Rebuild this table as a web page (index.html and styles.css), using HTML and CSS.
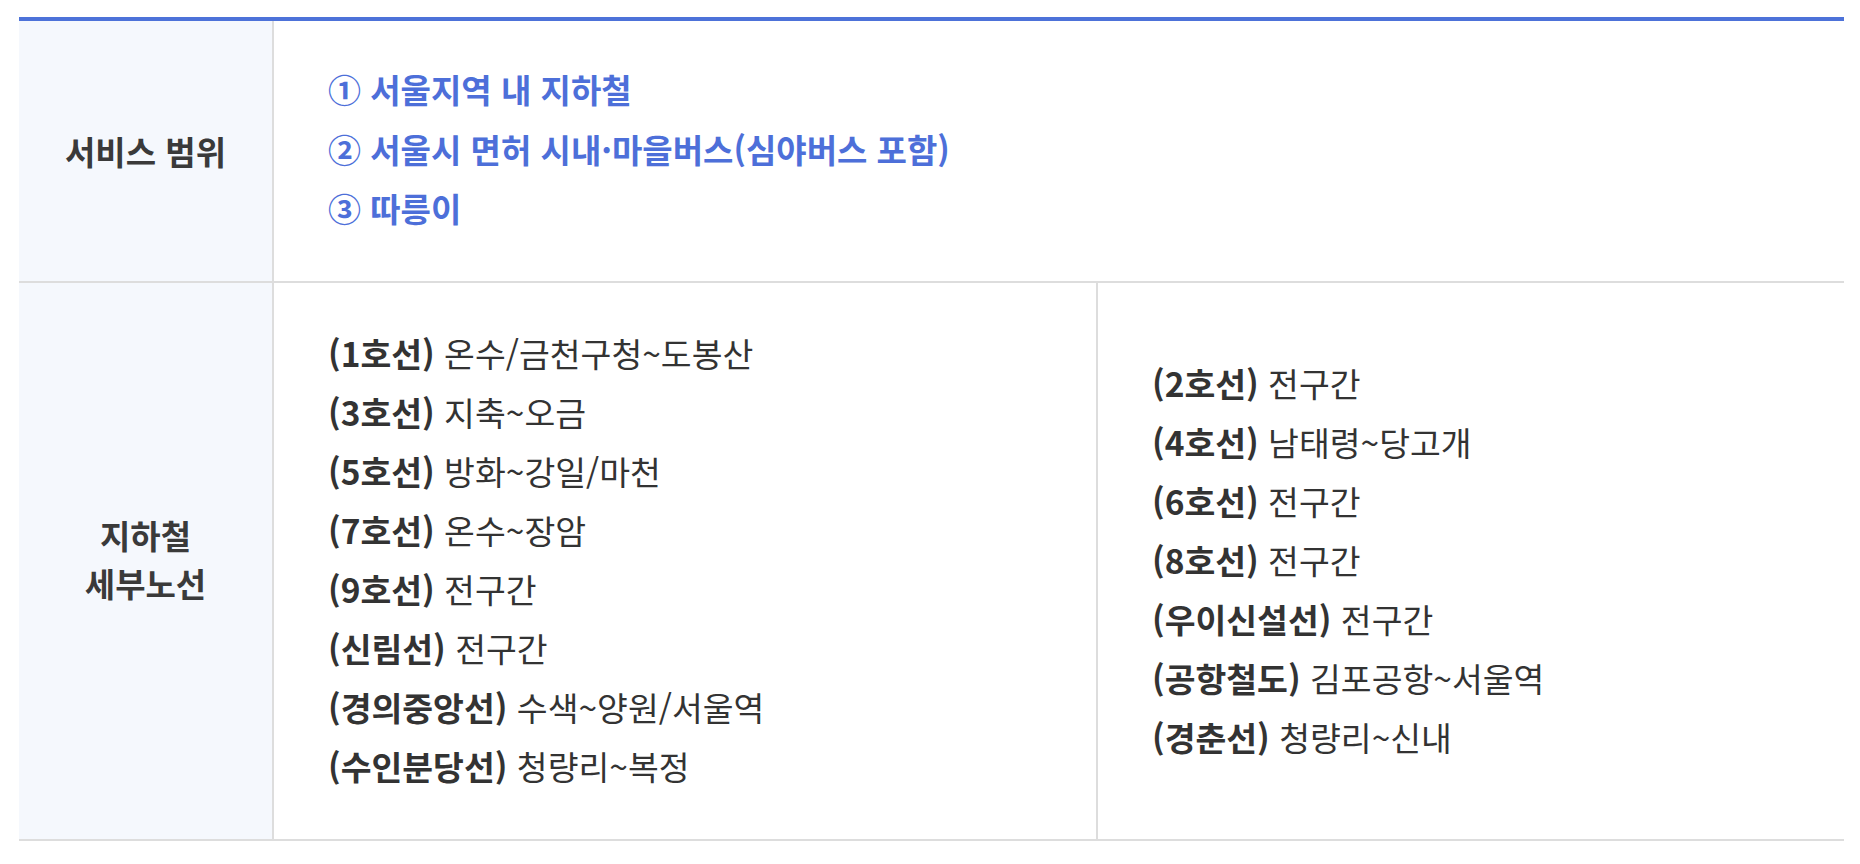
FILE: index.html
```html
<!DOCTYPE html>
<html lang="ko">
<head>
<meta charset="utf-8">
<title>서비스 범위</title>
<link rel="stylesheet" href="styles.css">
</head>
<body>
<div class="wrap">
<table class="info">
  <colgroup>
    <col class="c-head">
    <col class="c-a">
    <col class="c-b">
  </colgroup>
  <tbody>
    <tr>
      <th>서비스 범위</th>
      <td colspan="2" class="scope">
        <p>① 서울지역 내 지하철</p>
        <p>② 서울시 면허 시내·마을버스(심야버스 포함)</p>
        <p>③ 따릉이</p>
      </td>
    </tr>
    <tr>
      <th class="th-lines">지하철<br>세부노선</th>
      <td class="lines">
        <p><b>(1호선)</b> 온수/금천구청~도봉산</p>
        <p><b>(3호선)</b> 지축~오금</p>
        <p><b>(5호선)</b> 방화~강일/마천</p>
        <p><b>(7호선)</b> 온수~장암</p>
        <p><b>(9호선)</b> 전구간</p>
        <p><b>(신림선)</b> 전구간</p>
        <p><b>(경의중앙선)</b> 수색~양원/서울역</p>
        <p><b>(수인분당선)</b> 청량리~복정</p>
      </td>
      <td class="lines">
        <p><b>(2호선)</b> 전구간</p>
        <p><b>(4호선)</b> 남태령~당고개</p>
        <p><b>(6호선)</b> 전구간</p>
        <p><b>(8호선)</b> 전구간</p>
        <p><b>(우이신설선)</b> 전구간</p>
        <p><b>(공항철도)</b> 김포공항~서울역</p>
        <p><b>(경춘선)</b> 청량리~신내</p>
      </td>
    </tr>
  </tbody>
</table>
</div>
</body>
</html>
```

FILE: styles.css
```css
html, body {
  margin: 0;
  padding: 0;
  background: #ffffff;
}
body {
  font-family: "Noto Sans CJK KR", "Noto Sans", sans-serif;
  color: #333333;
}
.wrap {
  padding: 17px 16px 0 19px;
}
.info {
  width: 1825px;
  border-collapse: collapse;
  table-layout: fixed;
  border-top: 4px solid #4d72d9;
}
.c-head { width: 254px; }
.c-a { width: 824px; }
.info th {
  background: #f5f8fd;
  font-size: 33px;
  font-weight: 700;
  line-height: 48px;
  color: #3a3a3a;
  text-align: center;
  vertical-align: middle;
  border-right: 2px solid #dddddd;
  border-bottom: 2px solid #dddddd;
  padding: 0;
}
.info th.th-lines {
  padding-bottom: 4px;
}
.info td {
  vertical-align: middle;
  border-bottom: 2px solid #dddddd;
  padding: 40px 20px 44px 54px;
  font-size: 33.5px;
  line-height: 59px;
}
.info td + td {
  border-left: 2px solid #dddddd;
}
.info p {
  margin: 0;
  white-space: nowrap;
}
.info td.scope {
  color: #4d6fd9;
  font-weight: 700;
  font-size: 33px;
  line-height: 59.5px;
  padding: 39px 20px 42.5px 54px;
}
.lines b {
  font-weight: 700;
}
```
